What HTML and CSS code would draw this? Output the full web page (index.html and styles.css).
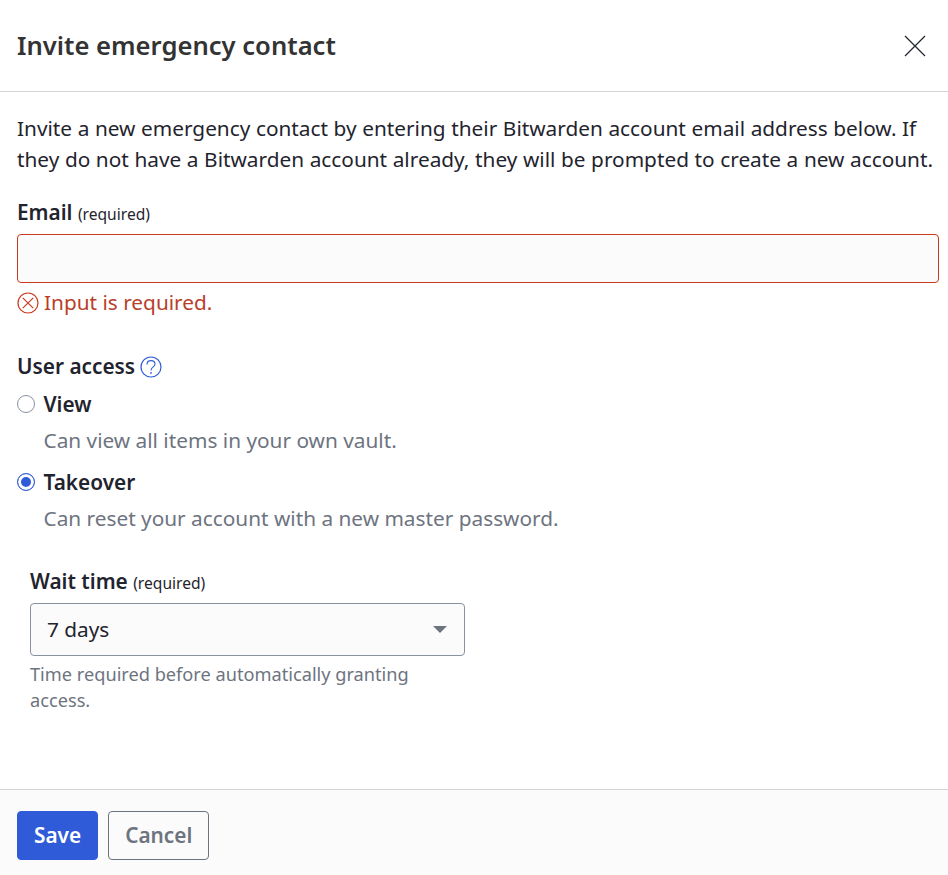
FILE: index.html
```html
<!DOCTYPE html>
<html>
<head>
    <title>Invite emergency contact</title>
    <link rel="stylesheet" href="styles.css">
</head>
<body>
    <div class="dialog">
        <div class="dialog-header">
            <h1 class="dialog-title">Invite emergency contact</h1>
            <button class="close-button" aria-label="Close">
                <svg width="22" height="22" viewBox="0 0 22 22"><path d="M1 1L21 21M21 1L1 21" stroke="#1f242e" stroke-width="1.2" fill="none"/></svg>
            </button>
        </div>

        <div class="dialog-body">
            <p class="intro">Invite a new emergency contact by entering their Bitwarden account email address below. If they do not have a Bitwarden account already, they will be prompted to create a new account.</p>

            <div class="field">
                <label class="field-label">Email <span class="required">(required)</span></label>
                <input class="text-input invalid" type="text">
                <div class="error">
                    <svg width="22" height="22" viewBox="0 0 22 22"><circle cx="11" cy="11" r="10" stroke="#c83a1e" stroke-width="1.2" fill="none"/><path d="M5.8 5.8L16.2 16.2M16.2 5.8L5.8 16.2" stroke="#c83a1e" stroke-width="1.2" fill="none"/></svg>
                    <span>Input is required.</span>
                </div>
            </div>

            <div class="access">
                <div class="access-label">
                    <span>User access</span>
                    <svg width="22" height="22" viewBox="0 0 22 22"><circle cx="11" cy="11" r="10" stroke="#2f5bd8" stroke-width="1.2" fill="none"/><path d="M7 8.4C7 6 8.8 4.6 11 4.6C13.2 4.6 15 6 15 8.2C15 10.8 11 11 11 14.4" stroke="#2f5bd8" stroke-width="1.1" fill="none"/><circle cx="11" cy="16.9" r="0.9" fill="#2f5bd8"/></svg>
                </div>

                <div class="radio-row">
                    <span class="radio"></span>
                    <span class="radio-label">View</span>
                </div>
                <div class="radio-hint">Can view all items in your own vault.</div>

                <div class="radio-row">
                    <span class="radio checked"></span>
                    <span class="radio-label">Takeover</span>
                </div>
                <div class="radio-hint">Can reset your account with a new master password.</div>
            </div>

            <div class="wait-time">
                <label class="field-label">Wait time <span class="required">(required)</span></label>
                <div class="select">
                    <span class="select-value">7 days</span>
                    <span class="caret"></span>
                </div>
                <div class="field-hint">Time required before automatically granting access.</div>
            </div>
        </div>

        <div class="dialog-footer">
            <button class="btn btn-primary">Save</button>
            <button class="btn btn-secondary">Cancel</button>
        </div>
    </div>
</body>
</html>
```

FILE: styles.css
```css
* {
    box-sizing: border-box;
}

html, body {
    height: 100%;
}

body {
    margin: 0;
    background: #fff;
    color: #1f242e;
    font-family: "Noto Sans", sans-serif;
    font-size: 20.8px;
}

.dialog {
    display: flex;
    flex-direction: column;
    height: 875px;
}

.dialog-header {
    display: flex;
    align-items: center;
    justify-content: space-between;
    height: 92px;
    padding: 0 22px 0 17px;
    border-bottom: 1px solid #d3d3da;
}

.dialog-title {
    margin: 0;
    font-size: 25.6px;
    font-weight: 600;
    color: #333;
}

.close-button {
    display: flex;
    padding: 0;
    border: none;
    background: none;
}

.dialog-body {
    flex: 1;
    padding: 21px 9px 0 17px;
}

.intro {
    margin: 0;
    line-height: 31px;
    word-spacing: 0.2px;
}

.field {
    margin-top: 24px;
}

.field-label {
    display: block;
    font-weight: 600;
    line-height: 27px;
}

.required {
    font-weight: 400;
    font-size: 15.6px;
}

.text-input {
    display: block;
    width: 100%;
    height: 49px;
    margin-top: 6px;
    border: 1px solid #c83a1e;
    border-radius: 4px;
    background: #fbfbfb;
}

.error {
    display: flex;
    align-items: center;
    gap: 5px;
    margin-top: 6px;
    color: #b8402a;
    line-height: 27px;
}

.access {
    margin-top: 37px;
}

.access-label {
    display: flex;
    align-items: center;
    gap: 5px;
    font-weight: 600;
    line-height: 27px;
}

.radio-row {
    display: flex;
    align-items: center;
    gap: 8px;
    height: 27px;
    margin-top: 10px;
}

.radio {
    width: 18px;
    height: 18px;
    border: 1px solid #89929f;
    border-radius: 50%;
    background: #fff;
}

.radio.checked {
    border-color: #2f5bd8;
    background: #2f5bd8;
    box-shadow: inset 0 0 0 3px #fff;
}

.radio-label {
    font-weight: 600;
    margin-left: 0.5px;
}

.radio-hint {
    margin-top: 10px;
    padding-left: 26.5px;
    line-height: 27px;
    color: #6d7480;
}

.radio-hint + .radio-row {
    margin-top: 14px;
}

.wait-time {
    width: 448px;
    margin-top: 36px;
    padding-left: 13px;
}

.select {
    display: flex;
    align-items: center;
    justify-content: space-between;
    height: 53px;
    margin-top: 6px;
    padding: 0 17px 0 16px;
    border: 1px solid #89929f;
    border-radius: 4px;
    background: #fbfbfb;
}

.select-value {
    padding-bottom: 2px;
}

.caret {
    width: 0;
    height: 0;
    border-left: 7px solid transparent;
    border-right: 7px solid transparent;
    border-top: 7px solid #6d7480;
}

.field-hint {
    margin-top: 5px;
    font-size: 18.2px;
    line-height: 26px;
    color: #6d7480;
}

.dialog-footer {
    display: flex;
    gap: 10px;
    height: 86px;
    padding: 21px 17px 0;
    border-top: 1px solid #d3d3da;
    background: #fbfbfb;
}

.btn {
    height: 49px;
    padding: 0 16px 2px;
    border-radius: 4px;
    font-family: inherit;
    font-size: 20.8px;
    font-weight: 600;
}

.btn-primary {
    border: 1px solid #2f5bd8;
    background: #2f5bd8;
    color: #fff;
}

.btn-secondary {
    border: 1px solid #6d7480;
    background: transparent;
    color: #6d7480;
}
```
